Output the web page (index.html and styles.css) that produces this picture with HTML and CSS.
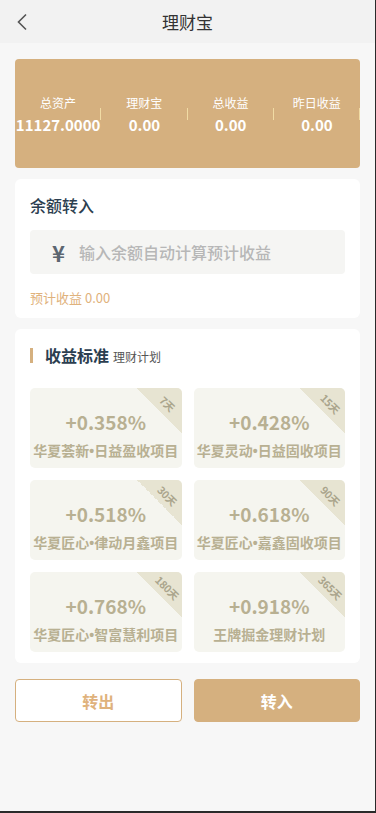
FILE: index.html
```html
<!DOCTYPE html>
<html lang="zh">
<head>
<meta charset="utf-8">
<title>理财宝</title>
<link rel="stylesheet" href="styles.css">
</head>
<body>
<div class="app">
  <header class="topbar">
    <span class="back">
      <svg width="12" height="18" viewBox="0 0 12 18"><path d="M10 1.5 L2.5 9 L10 16.5" fill="none" stroke="#555" stroke-width="1.6"/></svg>
    </span>
    <h1 class="title">理财宝</h1>
    <span></span>
  </header>

  <main class="main">
    <section class="summary">
      <div class="sum-item"><div class="sum-label">总资产</div><div class="sum-value">11127.0000</div></div>
      <div class="sum-item"><div class="sum-label">理财宝</div><div class="sum-value">0.00</div></div>
      <div class="sum-item"><div class="sum-label">总收益</div><div class="sum-value">0.00</div></div>
      <div class="sum-item"><div class="sum-label">昨日收益</div><div class="sum-value">0.00</div></div>
    </section>

    <section class="card transfer">
      <h2 class="card-title">余额转入</h2>
      <div class="input-box">
        <span class="yen">¥</span>
        <span class="placeholder">输入余额自动计算预计收益</span>
      </div>
      <div class="expect">预计收益 0.00</div>
    </section>

    <section class="card plans">
      <div class="plans-head">
        <span class="bar"></span>
        <span class="plans-title">收益标准</span>
        <span class="plans-sub">理财计划</span>
      </div>
      <div class="grid">
        <div class="tile"><div class="tag"><span>7天</span></div><div class="rate">+0.358%</div><div class="name">华夏荟新<span class="dot">•</span>日益盈收项目</div></div>
        <div class="tile"><div class="tag"><span>15天</span></div><div class="rate">+0.428%</div><div class="name">华夏灵动<span class="dot">•</span>日益固收项目</div></div>
        <div class="tile"><div class="tag"><span>30天</span></div><div class="rate">+0.518%</div><div class="name">华夏匠心<span class="dot">•</span>律动月鑫项目</div></div>
        <div class="tile"><div class="tag"><span>90天</span></div><div class="rate">+0.618%</div><div class="name">华夏匠心<span class="dot">•</span>嘉鑫固收项目</div></div>
        <div class="tile"><div class="tag"><span>180天</span></div><div class="rate">+0.768%</div><div class="name">华夏匠心<span class="dot">•</span>智富慧利项目</div></div>
        <div class="tile"><div class="tag"><span>365天</span></div><div class="rate">+0.918%</div><div class="name">王牌掘金理财计划</div></div>
      </div>
    </section>

    <div class="actions">
      <button class="btn btn-out">转出</button>
      <button class="btn btn-in">转入</button>
    </div>
  </main>
</div>
</body>
</html>
```

FILE: styles.css
```css
html {
  background: #2a2a2a;
}
body {
  margin: 0;
  font-family: "Noto Sans CJK SC", "Noto Sans", sans-serif;
}
.app {
  width: 375px;
  height: 811px;
  background: #f7f7f7;
  overflow: hidden;
}
.topbar {
  height: 43px;
  background: #f2f2f2;
  display: grid;
  grid-template-columns: 43px 1fr 43px;
  align-items: center;
}
.back {
  display: flex;
  padding-left: 16px;
  padding-top: 1px;
}
.title {
  margin: 0;
  text-align: center;
  font-size: 17px;
  font-weight: 400;
  color: #333;
  line-height: 43px;
}
.main {
  padding: 16px 15px 0;
}
.summary {
  height: 109px;
  background: #d5b07f;
  border-radius: 4px;
  display: flex;
  align-items: center;
}
.sum-item {
  flex: 1;
  text-align: center;
  color: #fff;
  position: relative;
  padding-top: 2px;
}
.sum-item::after {
  content: "";
  position: absolute;
  right: 0;
  top: 15px;
  width: 1px;
  height: 12px;
  background: #f1dba4;
}
.sum-label {
  font-size: 12px;
  line-height: 16px;
}
.sum-value {
  font-size: 15px;
  font-weight: 700;
  line-height: 20px;
  margin-top: 4px;
}
.card {
  background: #fff;
  border-radius: 6px;
  margin-top: 11px;
}
.transfer {
  padding: 15px 15px 11px;
}
.card-title {
  margin: 0;
  font-size: 16px;
  font-weight: 500;
  line-height: 22px;
  color: #2c3e50;
}
.input-box {
  margin-top: 14px;
  height: 44px;
  background: #f5f5f3;
  border-radius: 4px;
  display: flex;
  align-items: center;
  padding-left: 22px;
  gap: 14px;
}
.yen {
  font-size: 22px;
  font-weight: 700;
  color: #5c6670;
  line-height: 1;
}
.placeholder {
  font-size: 16px;
  font-weight: 500;
  color: #b7b7b7;
}
.expect {
  margin-top: 15px;
  font-size: 13px;
  line-height: 18px;
  color: #dfb27c;
}
.plans {
  padding: 15px 15px 11px;
}
.plans-head {
  display: flex;
  align-items: center;
  height: 22px;
}
.bar {
  width: 3px;
  height: 15px;
  background: #d5b07f;
  margin-right: 12px;
}
.plans-title {
  font-size: 16px;
  font-weight: 700;
  color: #2c3e50;
}
.plans-sub {
  font-size: 12px;
  color: #555;
  margin-left: 4px;
  padding-top: 2px;
}
.grid {
  margin-top: 22px;
  display: grid;
  grid-template-columns: 1fr 1fr;
  gap: 12px;
}
.tile {
  position: relative;
  height: 80px;
  background: #f5f5ef;
  border-radius: 5px;
  overflow: hidden;
  text-align: center;
  padding-top: 21px;
  box-sizing: border-box;
  color: #b8b092;
}
.tag {
  position: absolute;
  top: 0;
  right: 0;
  width: 45px;
  height: 45px;
  background: linear-gradient(45deg, transparent 50%, #e7e4d2 50%);
}
.tag span {
  position: absolute;
  top: 9px;
  right: 0;
  width: 30px;
  line-height: 14px;
  font-size: 10.5px;
  font-weight: 700;
  color: #aaa48c;
  text-align: center;
  white-space: nowrap;
  letter-spacing: -0.3px;
  transform: rotate(45deg);
}
.rate {
  font-size: 19px;
  font-weight: 700;
  line-height: 26px;
}
.name {
  margin-top: 5px;
  font-size: 14px;
  font-weight: 700;
  line-height: 20px;
  white-space: nowrap;
}
.dot {
  font-family: "Liberation Sans", sans-serif;
}
.actions {
  margin-top: 16px;
  display: grid;
  grid-template-columns: 1fr 1fr;
  gap: 12px;
}
.btn {
  height: 43px;
  border-radius: 4px;
  font-family: inherit;
  font-size: 16px;
  font-weight: 700;
  border: 1px solid #d5b07f;
  box-sizing: border-box;
}
.btn-out {
  background: #fff;
  color: #dfb27c;
}
.btn-in {
  background: #d5b07f;
  color: #fff;
}
```
